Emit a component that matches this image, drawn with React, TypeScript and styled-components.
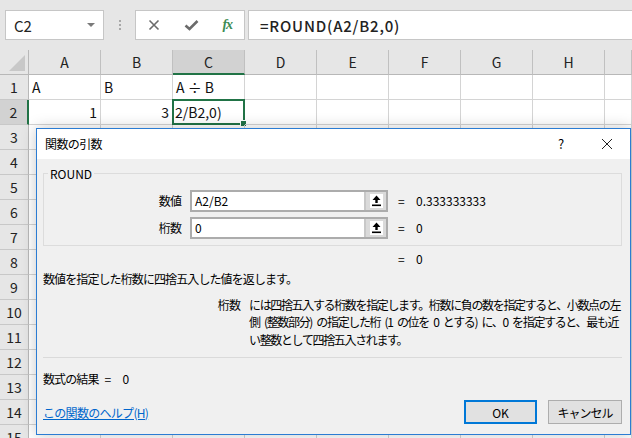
import React from 'react'
import styled, { createGlobalStyle } from 'styled-components'

const GlobalStyle = createGlobalStyle`
  html, body {
    margin: 0;
    padding: 0;
    background: #e6e6e6;
  }
  body {
    font-family: 'Noto Sans CJK JP', 'Noto Sans', sans-serif;
  }
`

const Page = styled.div`
  position: relative;
  width: 632px;
  height: 438px;
  overflow: hidden;
  background: #e6e6e6;
`

const Toolbar = styled.div`
  display: flex;
  align-items: stretch;
  height: 30px;
  padding: 10px 0 10px 5px;
`

const NameBox = styled.div`
  display: flex;
  align-items: center;
  justify-content: space-between;
  width: 99px;
  padding: 0 8px 0 8px;
  box-sizing: border-box;
  background: #fff;
  border: 1px solid #c6c6c6;
  font-size: 15px;
  color: #222;
`

const DropArrow = styled.span`
  width: 0;
  height: 0;
  border-left: 4px solid transparent;
  border-right: 4px solid transparent;
  border-top: 4px solid #7a7a7a;
`

const Grip = styled.div`
  display: flex;
  flex-direction: column;
  justify-content: center;
  gap: 2px;
  width: 31px;
  align-items: center;

  span {
    width: 2px;
    height: 2px;
    background: #a8a8a8;
  }
`

const FxButtons = styled.div`
  display: flex;
  align-items: center;
  justify-content: space-around;
  width: 110px;
  box-sizing: border-box;
  background: #fff;
  border: 1px solid #c6c6c6;
  margin-right: 3px;
`

const FxLabel = styled.span`
  font-family: 'Liberation Serif', serif;
  font-style: italic;
  font-size: 14px;
  font-weight: bold;
  color: #3d8b55;
  letter-spacing: -1px;
`

const FormulaBox = styled.div`
  flex: 1;
  display: flex;
  align-items: center;
  padding-left: 11px;
  background: #fff;
  border: 1px solid #c6c6c6;
  border-right: none;
  font-size: 15px;
  font-weight: 500;
  letter-spacing: 0.8px;
  color: #222;
`

const Sheet = styled.div`
  display: grid;
  grid-template-columns: 29px repeat(8, 72px) 1fr;
  grid-auto-rows: 25px;
  background: #fff;
`

const Corner = styled.div`
  position: relative;
  background: #e6e6e6;
  border-right: 1px solid #b8b8b8;
  border-bottom: 1px solid #b8b8b8;

  &::after {
    content: '';
    position: absolute;
    right: 3px;
    bottom: 3px;
    width: 0;
    height: 0;
    border-left: 16px solid transparent;
    border-bottom: 16px solid #c8c8c8;
  }
`

const ColHead = styled.div<{ $active?: boolean }>`
  display: flex;
  align-items: center;
  justify-content: center;
  background: ${(p) => (p.$active ? '#d2d2d2' : '#e6e6e6')};
  border-right: 1px solid #c0c0c0;
  border-bottom: ${(p) => (p.$active ? '2px solid #217346' : '1px solid #b8b8b8')};
  font-size: 14px;
  color: #222;
`

const RowHead = styled.div<{ $active?: boolean }>`
  display: flex;
  align-items: center;
  justify-content: center;
  background: ${(p) => (p.$active ? '#d2d2d2' : '#e6e6e6')};
  border-right: ${(p) => (p.$active ? '2px solid #217346' : '1px solid #b8b8b8')};
  border-bottom: 1px solid #c8c8c8;
  font-size: 14px;
  color: #222;
`

const Cell = styled.div<{ $align?: 'left' | 'right'; $selected?: boolean }>`
  position: relative;
  display: flex;
  align-items: center;
  justify-content: ${(p) => (p.$align === 'right' ? 'flex-end' : 'flex-start')};
  padding: 0 3px;
  box-sizing: border-box;
  border-right: 1px solid #d4d4d4;
  border-bottom: 1px solid #d4d4d4;
  font-size: 14px;
  color: #111;
  white-space: nowrap;
  ${(p) =>
    p.$selected &&
    `
    border: 2px solid #217346;
    padding-left: 1px;
    margin: -1px 0 0 -1px;
  `}
`

const FillHandle = styled.span`
  position: absolute;
  right: -4px;
  bottom: -4px;
  width: 5px;
  height: 5px;
  background: #217346;
  border: 1px solid #fff;
`

const Dialog = styled.div`
  position: absolute;
  left: 36px;
  top: 128px;
  width: 595px;
  height: 307px;
  box-sizing: border-box;
  display: flex;
  flex-direction: column;
  background: #f0f0f0;
  border: 1px solid #2b7cd3;
  box-shadow: 0 0 14px rgba(0, 0, 0, 0.22);
  font-size: 12px;
  color: #000;
  letter-spacing: -0.9px;
`

const TitleBar = styled.div`
  display: flex;
  align-items: center;
  height: 30px;
  padding-left: 8px;
  background: #fff;
`

const Title = styled.div`
  flex: 1;
  font-size: 12px;
  letter-spacing: -0.6px;
`

const TitleBtn = styled.div`
  width: 46px;
  display: flex;
  justify-content: center;
  align-items: center;
  font-size: 13px;
  letter-spacing: 0;
`

const Body = styled.div`
  display: flex;
  flex-direction: column;
  padding: 14px 8px 10px 6px;
`

const Group = styled.div`
  position: relative;
  display: flex;
  flex-direction: column;
  gap: 5px;
  height: 73px;
  box-sizing: border-box;
  padding-top: 16px;
  border: 1px solid #dcdcdc;
`

const Legend = styled.div`
  position: absolute;
  left: 4px;
  top: -9px;
  padding: 0 2px;
  background: #f0f0f0;
  letter-spacing: 0;
`

const ArgRow = styled.div`
  display: flex;
  align-items: center;
  height: 22px;
`

const ArgLabel = styled.div<{ $width: number }>`
  width: ${(p) => p.$width}px;
  flex: none;
  text-align: right;
  margin-right: 9px;
`

const ArgInput = styled.div`
  display: flex;
  width: 198px;
  height: 22px;
  box-sizing: border-box;
  border: 2px solid #acacac;
  background: #fff;
`

const ArgText = styled.div`
  flex: 1;
  display: flex;
  align-items: center;
  padding-left: 3px;
  letter-spacing: 0;
`

const RefButton = styled.div`
  width: 20px;
  display: flex;
  align-items: center;
  justify-content: center;
  border-left: 2px solid #c8c8c8;
  background: #dadada;

  span {
    display: flex;
    align-items: center;
    justify-content: center;
    width: 13px;
    height: 14px;
    background: #fff;
  }
`

const Eq = styled.span<{ $gap?: number }>`
  margin-left: ${(p) => p.$gap ?? 10}px;
  width: 18px;
  letter-spacing: 0;
`

const Value = styled.span`
  letter-spacing: 0;
`

const ResultRow = styled.div`
  display: flex;
  height: 16px;
  margin-top: 5px;
  padding-left: 345px;
  align-items: center;
`

const Summary = styled.div`
  margin-top: 4px;
  line-height: 16px;
`

const ParamHelp = styled.div`
  display: flex;
  margin-top: 9px;
  line-height: 17.5px;
`

const ParamText = styled.div`
  width: 375px;
  white-space: nowrap;
  letter-spacing: -1.35px;
  word-spacing: 3px;
`

const Separator = styled.div`
  height: 1px;
  margin-top: 9px;
  background: #dadada;
`

const FormulaResult = styled.div`
  display: flex;
  align-items: center;
  margin-top: 13px;
  line-height: 16px;
`

const Footer = styled.div`
  display: flex;
  align-items: center;
  margin-top: 13px;
  height: 24px;
`

const HelpLink = styled.a`
  flex: 1;
  color: #0066cc;
  text-decoration: underline;
  cursor: pointer;
  letter-spacing: -0.7px;
`

const Button = styled.button<{ $primary?: boolean }>`
  width: ${(p) => (p.$primary ? 73 : 74)}px;
  height: 24px;
  margin-left: 11px;
  box-sizing: border-box;
  background: #e1e1e1;
  border: ${(p) => (p.$primary ? '2px solid #0078d7' : '1px solid #adadad')};
  font-family: inherit;
  font-size: 12px;
  letter-spacing: ${(p) => (p.$primary ? '0' : '-1px')};
  color: #000;
  padding: 0;
`

const COLUMNS = ['A', 'B', 'C', 'D', 'E', 'F', 'G', 'H', '']

type CellData = { text: string; align?: 'left' | 'right'; selected?: boolean }

const ROWS: Record<number, Record<string, CellData>> = {
  1: { A: { text: 'A' }, B: { text: 'B' }, C: { text: 'A ÷ B' } },
  2: { A: { text: '1', align: 'right' }, B: { text: '3', align: 'right' }, C: { text: '2/B2,0)', selected: true } },
}

const RefIcon = () => (
  <svg width='11' height='12' viewBox='0 0 11 12'>
    <path d='M5.5 0.5 L1.5 5 H4.3 V8 H6.7 V5 H9.5 Z' fill='#000' />
    <rect x='1' y='9.5' width='9' height='1.6' fill='#000' />
  </svg>
)

export default function App() {
  return (
    <Page>
      <GlobalStyle />
      <Toolbar>
        <NameBox>
          C2
          <DropArrow />
        </NameBox>
        <Grip>
          <span />
          <span />
          <span />
        </Grip>
        <FxButtons>
          <svg width='12' height='12' viewBox='0 0 12 12'>
            <path d='M1.5 1.5 L10.5 10.5 M10.5 1.5 L1.5 10.5' stroke='#6b6b6b' strokeWidth='1.6' />
          </svg>
          <svg width='15' height='12' viewBox='0 0 15 12'>
            <path d='M1.5 6.5 L5.5 10 L13.5 2' stroke='#6b6b6b' strokeWidth='2.6' fill='none' />
          </svg>
          <FxLabel>fx</FxLabel>
        </FxButtons>
        <FormulaBox>=ROUND(A2/B2,0)</FormulaBox>
      </Toolbar>

      <Sheet>
        <Corner />
        {COLUMNS.map((c, i) => (
          <ColHead key={i} $active={c === 'C'}>
            {c}
          </ColHead>
        ))}
        {Array.from({ length: 15 }, (_, r) => r + 1).map((row) => (
          <React.Fragment key={row}>
            <RowHead $active={row === 2}>{row}</RowHead>
            {COLUMNS.map((c, i) => {
              const data = ROWS[row]?.[c]
              return (
                <Cell key={i} $align={data?.align} $selected={data?.selected}>
                  {data?.text}
                  {data?.selected && <FillHandle />}
                </Cell>
              )
            })}
          </React.Fragment>
        ))}
      </Sheet>

      <Dialog>
        <TitleBar>
          <Title>関数の引数</Title>
          <TitleBtn>?</TitleBtn>
          <TitleBtn>
            <svg width='12' height='12' viewBox='0 0 12 12'>
              <path d='M1 1 L11 11 M11 1 L1 11' stroke='#222' strokeWidth='1' />
            </svg>
          </TitleBtn>
        </TitleBar>
        <Body>
          <Group>
            <Legend>ROUND</Legend>
            <ArgRow>
              <ArgLabel $width={137}>数値</ArgLabel>
              <ArgInput>
                <ArgText>A2/B2</ArgText>
                <RefButton>
                  <span>
                    <RefIcon />
                  </span>
                </RefButton>
              </ArgInput>
              <Eq>=</Eq>
              <Value>0.333333333</Value>
            </ArgRow>
            <ArgRow>
              <ArgLabel $width={137}>桁数</ArgLabel>
              <ArgInput>
                <ArgText>0</ArgText>
                <RefButton>
                  <span>
                    <RefIcon />
                  </span>
                </RefButton>
              </ArgInput>
              <Eq>=</Eq>
              <Value>0</Value>
            </ArgRow>
          </Group>
          <ResultRow>
            <Eq>=</Eq>
            <Value>0</Value>
          </ResultRow>
          <Summary>数値を指定した桁数に四捨五入した値を返します。</Summary>
          <ParamHelp>
            <ArgLabel $width={197}>桁数</ArgLabel>
            <ParamText>
              には四捨五入する桁数を指定します。桁数に負の数を指定すると、小数点の左
              <br />
              側 (整数部分) の指定した桁 (1 の位を 0 とする) に、0 を指定すると、最も近
              <br />
              い整数として四捨五入されます。
            </ParamText>
          </ParamHelp>
          <Separator />
          <FormulaResult>
            数式の結果
            <Eq $gap={6}>=</Eq>
            <Value>0</Value>
          </FormulaResult>
          <Footer>
            <HelpLink>この関数のヘルプ(H)</HelpLink>
            <Button $primary>OK</Button>
            <Button>キャンセル</Button>
          </Footer>
        </Body>
      </Dialog>
    </Page>
  )
}
